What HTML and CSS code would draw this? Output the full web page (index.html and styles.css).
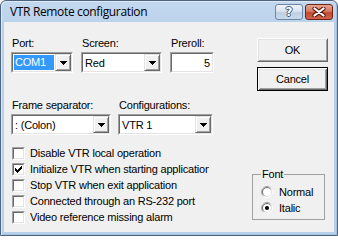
FILE: index.html
```html
<!DOCTYPE html>
<html>
<head>
<meta charset="utf-8">
<title>VTR Remote configuration</title>
<link rel="stylesheet" href="styles.css">
</head>
<body>
<div class="window">
  <div class="titlebar">
    <span class="title">VTR Remote configuration</span>
    <div class="caption-buttons">
      <span class="cap help">?</span>
      <span class="cap close">
        <svg width="14" height="10" viewBox="0 0 14 10">
          <path d="M2.5 1.5 L11.5 8.5 M11.5 1.5 L2.5 8.5" stroke="#5a1a10" stroke-width="4.2" stroke-linecap="round"/>
          <path d="M2.5 1.5 L11.5 8.5 M11.5 1.5 L2.5 8.5" stroke="#fff" stroke-width="2.2" stroke-linecap="round"/>
        </svg>
      </span>
    </div>
  </div>
  <div class="client">
    <div class="left">
      <div class="row row1">
        <div class="field f-port">
          <div class="lbl">Port:</div>
          <div class="combo"><div class="combo-in">
            <div class="combo-val"><span class="sel">COM1</span></div>
            <div class="drop"><svg width="7" height="4" viewBox="0 0 7 4" shape-rendering="crispEdges"><path d="M0 0h7v1h-1v1h-1v1h-1v1h-1v-1h-1v-1h-1v-1h-1z" fill="#000"/></svg></div>
          </div></div>
        </div>
        <div class="field f-screen">
          <div class="lbl">Screen:</div>
          <div class="combo"><div class="combo-in">
            <div class="combo-val"><span class="val">Red</span></div>
            <div class="drop"><svg width="7" height="4" viewBox="0 0 7 4" shape-rendering="crispEdges"><path d="M0 0h7v1h-1v1h-1v1h-1v1h-1v-1h-1v-1h-1v-1h-1z" fill="#000"/></svg></div>
          </div></div>
        </div>
        <div class="field f-preroll">
          <div class="lbl">Preroll:</div>
          <div class="combo"><div class="combo-in edit">5</div></div>
        </div>
      </div>
      <div class="row row2">
        <div class="field f-frame">
          <div class="lbl">Frame separator:</div>
          <div class="combo"><div class="combo-in">
            <div class="combo-val"><span class="val">: (Colon)</span></div>
            <div class="drop"><svg width="7" height="4" viewBox="0 0 7 4" shape-rendering="crispEdges"><path d="M0 0h7v1h-1v1h-1v1h-1v1h-1v-1h-1v-1h-1v-1h-1z" fill="#000"/></svg></div>
          </div></div>
        </div>
        <div class="field f-conf">
          <div class="lbl">Configurations:</div>
          <div class="combo"><div class="combo-in">
            <div class="combo-val"><span class="val">VTR 1</span></div>
            <div class="drop"><svg width="7" height="4" viewBox="0 0 7 4" shape-rendering="crispEdges"><path d="M0 0h7v1h-1v1h-1v1h-1v1h-1v-1h-1v-1h-1v-1h-1z" fill="#000"/></svg></div>
          </div></div>
        </div>
      </div>
      <ul class="checks">
        <li class="check"><span class="cbox"><span class="cbox-in"></span></span><span class="ctext">Disable VTR local operation</span></li>
        <li class="check"><span class="cbox"><span class="cbox-in"><svg width="9" height="9" viewBox="0 0 9 9" shape-rendering="crispEdges"><g fill="#000"><rect x="1" y="3" width="1" height="3"/><rect x="2" y="4" width="1" height="3"/><rect x="3" y="5" width="1" height="3"/><rect x="4" y="4" width="1" height="3"/><rect x="5" y="3" width="1" height="3"/><rect x="6" y="2" width="1" height="3"/><rect x="7" y="1" width="1" height="3"/></g></svg></span></span><span class="ctext">Initialize VTR when starting application</span></li>
        <li class="check"><span class="cbox"><span class="cbox-in"></span></span><span class="ctext">Stop VTR when exit application</span></li>
        <li class="check"><span class="cbox"><span class="cbox-in"></span></span><span class="ctext">Connected through an RS-232 port</span></li>
        <li class="check"><span class="cbox"><span class="cbox-in"></span></span><span class="ctext">Video reference missing alarm</span></li>
      </ul>
    </div>
    <div class="right">
      <div class="btn">OK</div>
      <div class="btn btn-default">Cancel</div>
      <fieldset class="group">
        <legend>Font</legend>
        <div class="radio">
          <svg class="rdot" width="12" height="12" viewBox="0 0 12 12">
            <defs>
              <linearGradient id="ro" x1="0" y1="0" x2="1" y2="1"><stop offset="0.35" stop-color="#a0a0a0"/><stop offset="0.65" stop-color="#ffffff"/></linearGradient>
              <linearGradient id="ri" x1="0" y1="0" x2="1" y2="1"><stop offset="0.35" stop-color="#696969"/><stop offset="0.65" stop-color="#e3e3e3"/></linearGradient>
            </defs>
            <circle cx="6" cy="6" r="5.5" fill="none" stroke="url(#ro)"/>
            <circle cx="6" cy="6" r="4.5" fill="#fff" stroke="url(#ri)"/>
          </svg>
          <span>Normal</span>
        </div>
        <div class="radio">
          <svg class="rdot" width="12" height="12" viewBox="0 0 12 12">
            <circle cx="6" cy="6" r="5.5" fill="none" stroke="url(#ro)"/>
            <circle cx="6" cy="6" r="4.5" fill="#fff" stroke="url(#ri)"/>
            <circle cx="6" cy="6" r="2" fill="#000"/>
          </svg>
          <span>Italic</span>
        </div>
      </fieldset>
    </div>
  </div>
</div>
</body>
</html>
```
FILE: styles.css
```css
* { box-sizing: border-box; }
html, body { margin: 0; padding: 0; }
body {
  width: 338px;
  height: 236px;
  overflow: hidden;
  background: #ffffff;
  font-family: "Liberation Sans", Arial, sans-serif;
  font-size: 11px;
  letter-spacing: -0.2px;
  color: #000;
}
.window {
  width: 338px;
  height: 236px;
  border: 1px solid #4d6480;
  border-radius: 6px 6px 0 0;
  background: linear-gradient(to bottom, #c3d8ef 0, #bcd3ec 21px, #b8cfe9 22px, #b8cfe9 100%);
  padding: 0 3px 3px;
  display: flex;
  flex-direction: column;
  box-shadow: inset 1px 1px 0 #dfeaf6, inset -1px -1px 0 #a9c2de;
}
.titlebar {
  height: 21px;
  display: flex;
  justify-content: space-between;
  align-items: flex-start;
}
.title {
  font-family: "Open Sans", "Noto Sans", sans-serif;
  font-size: 12px;
  letter-spacing: -0.35px;
  line-height: 16px;
  margin: 3px 0 0 6px;
  color: #000;
}
.caption-buttons {
  display: flex;
  gap: 2px;
  margin: 3px 1px 0 0;
}
.cap {
  width: 28px;
  height: 16px;
  border-radius: 3px;
  display: flex;
  align-items: center;
  justify-content: center;
}
.help {
  border: 1px solid #6c86a4;
  background: linear-gradient(to bottom, #eef3f9 0%, #d9e4f0 45%, #bfd0e3 55%, #c8d9ec 100%);
  color: #fff;
  font-family: "DejaVu Sans", sans-serif;
  font-weight: bold;
  font-size: 12px;
  letter-spacing: 0;
  line-height: 14px;
  text-shadow: 1px 0 0 #3f5a7a, -1px 0 0 #3f5a7a, 0 1px 0 #3f5a7a, 0 -1px 0 #3f5a7a;
}
.close {
  border: 1px solid #6a2418;
  background: linear-gradient(to bottom, #e5a593 0%, #d77a62 45%, #c4492f 55%, #d0654b 100%);
}
.client {
  flex: 1;
  display: flex;
  background: #f0f0f0;
}
.left {
  width: 248px;
  padding: 15px 0 0 7px;
  display: flex;
  flex-direction: column;
}
.right {
  flex: 1;
  padding: 16px 0 12px 0;
  display: flex;
  flex-direction: column;
  align-items: flex-start;
}
.row { display: flex; }
.row1 { gap: 8px; }
.row2 { gap: 7px; margin-top: 26px; }
.lbl {
  height: 13px;
  line-height: 13px;
  padding-left: 1px;
  margin-bottom: 2px;
  white-space: nowrap;
}
.f-port { width: 62px; }
.f-screen { width: 81px; }
.f-preroll { width: 44px; }
.f-frame { width: 100px; }
.f-conf { width: 95px; }
.combo {
  height: 21px;
  border: 1px solid;
  border-color: #a0a0a0 #ffffff #ffffff #a0a0a0;
}
.combo-in {
  height: 100%;
  border: 1px solid;
  border-color: #696969 #e3e3e3 #e3e3e3 #696969;
  background: #fff;
  display: flex;
}
.combo-val {
  flex: 1;
  min-width: 0;
  display: flex;
  align-items: center;
  padding: 0 1px;
  white-space: nowrap;
}
.sel {
  flex: 1;
  height: 15px;
  line-height: 15px;
  background: #3399ff;
  color: #fff;
  padding-left: 1px;
}
.val { padding-left: 1px; }
.drop {
  width: 16px;
  border: 1px solid;
  border-color: #e3e3e3 #696969 #696969 #e3e3e3;
  background: #f0f0f0;
  box-shadow: inset 1px 1px 0 #ffffff, inset -1px -1px 0 #a0a0a0;
  display: flex;
  align-items: center;
  justify-content: center;
}
.drop svg { display: block; }
.edit {
  justify-content: flex-end;
  align-items: center;
  padding-right: 2px;
}
.checks {
  list-style: none;
  margin: 10px 0 0 0;
  padding: 0;
}
.check {
  height: 16px;
  display: flex;
  align-items: center;
  padding-left: 1px;
}
.cbox {
  width: 13px;
  height: 13px;
  flex: none;
  border: 1px solid;
  border-color: #a0a0a0 #ffffff #ffffff #a0a0a0;
  margin-right: 5px;
}
.cbox-in {
  display: block;
  width: 100%;
  height: 100%;
  border: 1px solid;
  border-color: #696969 #e3e3e3 #e3e3e3 #696969;
  background: #fff;
}
.cbox-in svg { display: block; }
.ctext {
  width: 179px;
  overflow: hidden;
  white-space: nowrap;
  line-height: 13px;
}
.btn {
  width: 71px;
  height: 24px;
  margin-left: 5px;
  display: flex;
  align-items: center;
  justify-content: center;
  background: #f0f0f0;
  border: 1px solid;
  border-color: #ffffff #696969 #696969 #ffffff;
  box-shadow: inset 1px 1px 0 #e3e3e3, inset -1px -1px 0 #a0a0a0;
}
.btn-default {
  margin-top: 5px;
  border-color: #000;
  box-shadow: inset 1px 1px 0 #ffffff, inset -1px -1px 0 #696969, inset 2px 2px 0 #e3e3e3, inset -2px -2px 0 #a0a0a0;
}
.group {
  margin: auto 0 0 0;
  width: 73px;
  min-inline-size: 0;
  border: 1px solid #a0a0a0;
  padding: 3px 0 3px 8px;
}
.group legend {
  padding: 0 1px;
  line-height: 13px;
}
.radio {
  height: 16px;
  display: flex;
  align-items: center;
}
.rdot { display: block; margin-right: 6px; flex: none; }
```
